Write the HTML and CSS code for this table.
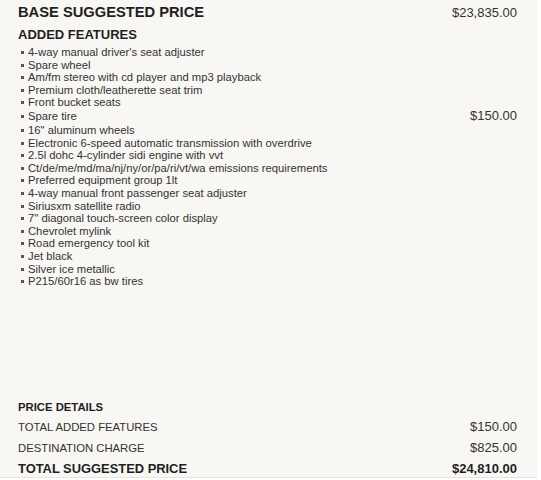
FILE: index.html
```html
<!DOCTYPE html>
<html lang="en">
<head>
    <meta charset="UTF-8">
    <title>Price Summary</title>
    <link rel="stylesheet" href="styles.css">
</head>
<body>
    <div class="sheet">
        <div class="row base">
            <h1>BASE SUGGESTED PRICE</h1>
            <span class="price">$23,835.00</span>
        </div>

        <h2>ADDED FEATURES</h2>
        <ul class="features">
            <li><span>4-way manual driver's seat adjuster</span></li>
            <li><span>Spare wheel</span></li>
            <li><span>Am/fm stereo with cd player and mp3 playback</span></li>
            <li><span>Premium cloth/leatherette seat trim</span></li>
            <li><span>Front bucket seats</span></li>
            <li class="priced"><span>Spare tire</span><span class="price">$150.00</span></li>
            <li><span>16" aluminum wheels</span></li>
            <li><span>Electronic 6-speed automatic transmission with overdrive</span></li>
            <li><span>2.5l dohc 4-cylinder sidi engine with vvt</span></li>
            <li><span>Ct/de/me/md/ma/nj/ny/or/pa/ri/vt/wa emissions requirements</span></li>
            <li><span>Preferred equipment group 1lt</span></li>
            <li><span>4-way manual front passenger seat adjuster</span></li>
            <li><span>Siriusxm satellite radio</span></li>
            <li><span>7" diagonal touch-screen color display</span></li>
            <li><span>Chevrolet mylink</span></li>
            <li><span>Road emergency tool kit</span></li>
            <li><span>Jet black</span></li>
            <li><span>Silver ice metallic</span></li>
            <li><span>P215/60r16 as bw tires</span></li>
        </ul>

        <div class="details">
            <h3>PRICE DETAILS</h3>
            <div class="row line">
                <span>TOTAL ADDED FEATURES</span>
                <span class="price">$150.00</span>
            </div>
            <div class="row line">
                <span>DESTINATION CHARGE</span>
                <span class="price">$825.00</span>
            </div>
            <div class="row total">
                <span>TOTAL SUGGESTED PRICE</span>
                <span class="price">$24,810.00</span>
            </div>
        </div>
    </div>
</body>
</html>
```

FILE: styles.css
```css
* {
    box-sizing: border-box;
    margin: 0;
    padding: 0;
}

html, body {
    height: 100%;
    overflow: hidden;
    background-color: #ffffff;
    font-family: "Liberation Sans", Arial, sans-serif;
    color: #333333;
}

.sheet {
    width: 537px;
    height: 478px;
    background-color: #f8f7f3;
    border-bottom: 1px solid #e4e3df;
    padding: 4px 20px 0 18px;
    display: flex;
    flex-direction: column;
}

.row {
    display: flex;
    justify-content: space-between;
    align-items: center;
}

.price {
    font-size: 13px;
    color: #333333;
}

h1 {
    font-size: 14.7px;
    color: #1f1f1f;
}

.base {
    height: 16px;
}

h2 {
    font-size: 13px;
    color: #1f1f1f;
    margin-top: 7px;
    margin-bottom: 4px;
}

.features {
    list-style: none;
    font-size: 11.25px;
    line-height: 12.6px;
}

.features li {
    display: flex;
    justify-content: space-between;
    align-items: center;
    padding-left: 10px;
    position: relative;
}

/* small square bullet */
.features li::before {
    content: "";
    position: absolute;
    left: 3px;
    top: 5px;
    width: 3px;
    height: 3px;
    background-color: #555555;
}

.features li.priced {
    height: 14px;
    margin-bottom: 1px;
}

.features li.priced::before {
    top: 6px;
}

.details {
    margin-top: auto;
    margin-bottom: -2px;
}

h3 {
    font-size: 11.3px;
    color: #1f1f1f;
    height: 15px;
}

.line {
    font-size: 11.3px;
    height: 21px;
}

.total {
    font-size: 12.9px;
    font-weight: bold;
    color: #1f1f1f;
    height: 21px;
}

.total .price {
    font-size: 13px;
    font-weight: bold;
    color: #1f1f1f;
}
```
